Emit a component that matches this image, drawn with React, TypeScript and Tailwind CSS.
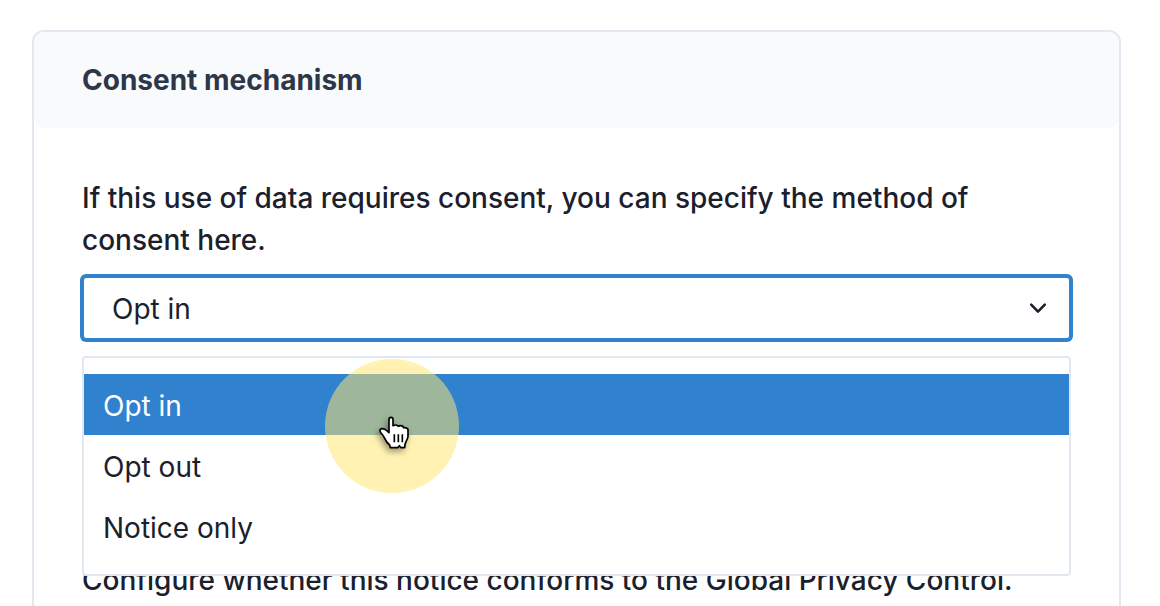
import { useState } from "react";

const OPTIONS = ["Opt in", "Opt out", "Notice only"];

function ChevronIcon() {
  return (
    <svg
      viewBox="0 0 20 14"
      className="pointer-events-none absolute inset-y-0 right-[23px] my-auto h-[14px] w-5"
      fill="none"
      stroke="#1a202c"
      strokeWidth="2.6"
      strokeLinecap="round"
      strokeLinejoin="round"
      aria-hidden="true"
    >
      <path d="M3.2 3.6 L10 10.6 L16.8 3.6" />
    </svg>
  );
}

function Pointer() {
  return (
    <div
      className="pointer-events-none absolute left-[241px] top-px flex size-[134px] items-center justify-center rounded-full bg-[rgba(255,231,112,0.53)]"
      aria-hidden="true"
    >
      <svg
        viewBox="0 0 96 102"
        className="mt-[14px] ml-[6px] h-[34px] w-8 overflow-visible drop-shadow-[-2px_3px_3px_rgba(0,0,0,0.4)]"
        strokeLinejoin="round"
        strokeLinecap="butt"
      >
        <path
          d="M30 48 L30 11 Q30 4 36 4 Q42 4 42 11 L42 29 Q50 25 57 29 L57 31 Q65 27 72 31 L73 35 Q83 34 87 40 L87 62 Q86 69 81 77 L78 85 L77 95 L66 95 L61 89 L56 95 L34 95 L32 87 Q22 79 17 67 Q13 58 6 51 Q1 44 4 40 Q9 36 17 40 Q23 43 30 50 Z"
          fill="#fff"
          stroke="#000"
          strokeWidth="5"
        />
        <path d="M46 55 V79 M58 55 V79 M70 55 V79" fill="none" stroke="#000" strokeWidth="5" />
      </svg>
    </div>
  );
}

export default function App() {
  const [value, setValue] = useState("Opt in");

  return (
    <main className="h-screen overflow-hidden bg-white pt-[30px] pr-[39px] pl-8 font-['Inter',sans-serif] text-[28px] leading-[42px] text-[#1a202c]">
      <section className="rounded-xl border-2 border-[#e2e8f0] bg-white">
        <header className="rounded-[10px] bg-[#f9fafc] px-12 py-[27px]">
          <h2 className="font-bold text-[#2d3748]">Consent mechanism</h2>
        </header>

        <div className="px-12 pt-[49px] pb-24">
          <label htmlFor="mechanism" className="block font-medium">
            If this use of data requires consent, you can specify the method of consent here.
          </label>

          <div className="relative mt-[15px]">
            <select
              id="mechanism"
              value={value}
              onChange={(e) => setValue(e.target.value)}
              className="block h-16 w-full appearance-none rounded-[4px] border-2 border-[#3182ce] bg-white px-7 pt-0.5 ring-2 ring-[#3182ce] outline-none"
            >
              {OPTIONS.map((o) => (
                <option key={o}>{o}</option>
              ))}
            </select>
            <ChevronIcon />

            <div className="absolute inset-x-0 top-full z-10 mt-4 rounded-[4px] border-2 border-[#e2e8f0] bg-white pt-4 pb-[17px]">
              <div role="listbox" aria-label="Consent mechanism">
                {OPTIONS.map((o) => (
                  <button
                    key={o}
                    type="button"
                    role="option"
                    aria-selected={o === value}
                    onClick={() => setValue(o)}
                    className={
                      o === value
                        ? "block h-[61px] w-full bg-[#3182ce] px-[19px] pt-0.5 text-left text-white"
                        : "block h-[61px] w-full px-[19px] pt-0.5 text-left"
                    }
                  >
                    {o}
                  </button>
                ))}
              </div>
              <Pointer />
            </div>
          </div>

          <p className="mt-[219px] font-medium">
            Configure whether this notice conforms to the Global Privacy Control.
          </p>
        </div>
      </section>
    </main>
  );
}
